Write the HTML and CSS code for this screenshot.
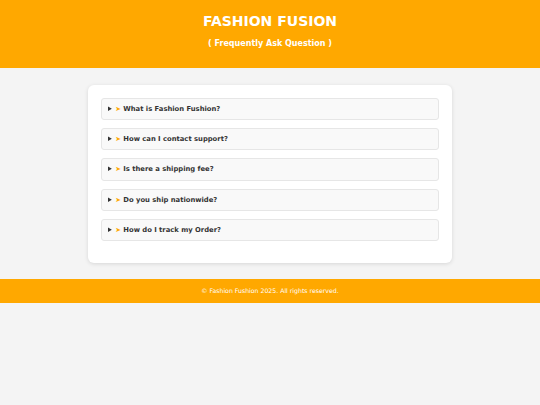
FILE: index.html
```html
<!DOCTYPE html>
<html lang="en">
<head>
<meta charset="utf-8">
<title>Fashion Fusion FAQ</title>
<link rel="stylesheet" href="styles.css">
</head>
<body>
<header class="site-header">
  <h1 class="title">FASHION FUSION</h1>
  <p class="subtitle">( Frequently Ask Question )</p>
</header>
<main class="content">
  <section class="faq-card">
    <details class="faq-item"><summary class="faq-q"><span class="arrow">➤</span> What is Fashion Fushion?</summary><p class="faq-a">Fashion Fusion is an online clothing store.</p></details>
    <details class="faq-item"><summary class="faq-q"><span class="arrow">➤</span> How can I contact support?</summary><p class="faq-a">Email us any time.</p></details>
    <details class="faq-item"><summary class="faq-q"><span class="arrow">➤</span> Is there a shipping fee?</summary><p class="faq-a">Shipping is free on large orders.</p></details>
    <details class="faq-item"><summary class="faq-q"><span class="arrow">➤</span> Do you ship nationwide?</summary><p class="faq-a">Yes, we do.</p></details>
    <details class="faq-item"><summary class="faq-q"><span class="arrow">➤</span> How do I track my Order?</summary><p class="faq-a">Use the tracking link in your email.</p></details>
  </section>
</main>
<footer class="site-footer">
  <p class="copy">© Fashion Fushion 2025. All rights reserved.</p>
</footer>
</body>
</html>
```
FILE: styles.css
```css
* { box-sizing: border-box; }
html, body { margin: 0; padding: 0; }
body {
  background: #f4f4f4;
  font-family: "DejaVu Sans", Verdana, sans-serif;
  color: #333;
}
.site-header {
  background: #ffa800;
  color: #fff;
  text-align: center;
  height: 68px;
  padding-top: 13px;
}
.title {
  margin: 0;
  font-size: 14px;
  font-weight: bold;
  line-height: 17px;
}
.subtitle {
  margin: 9px 0 0;
  font-size: 8px;
  font-weight: bold;
  line-height: 10px;
}
.content {
  padding: 17px 0 16px;
}
.faq-card {
  width: 364px;
  margin: 0 auto;
  background: #fff;
  border-radius: 6px;
  box-shadow: 0 1px 4px rgba(0,0,0,0.12);
  padding: 13px 13px 12px;
}
.faq-item {
  background: #f9f9f9;
  border: 1px solid #e6e6e6;
  border-radius: 3px;
  margin-bottom: 8px;
}
.faq-item:last-child { margin-bottom: 10px; }
.faq-q {
  font-size: 6.8px;
  font-weight: bold;
  line-height: 10px;
  padding: 5.1px 6px;
  color: #333;
  cursor: pointer;
}
.arrow { color: #ffa800; }
.faq-a {
  margin: 0;
  padding: 0 8px 6px;
  font-size: 7px;
}
.site-footer {
  background: #ffa800;
  height: 24px;
  display: flex;
  align-items: center;
  justify-content: center;
}
.copy {
  margin: 0;
  color: #fff;
  font-size: 6.2px;
}
```
